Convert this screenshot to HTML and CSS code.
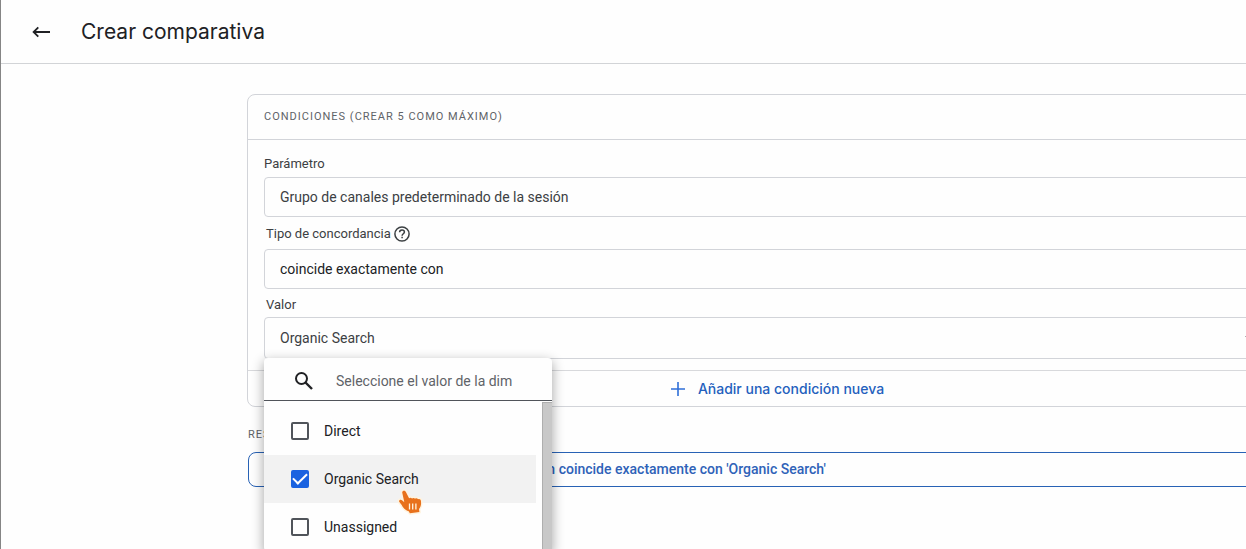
FILE: index.html
```html
<!DOCTYPE html>
<html lang="es">
<head>
<meta charset="utf-8">
<title>Crear comparativa</title>
<link rel="stylesheet" href="styles.css">
</head>
<body>
<div class="panel">
  <header class="topbar">
    <button class="back" type="button" aria-label="Volver">
      <svg width="20" height="14" viewBox="0 0 20 14" fill="none" stroke="currentColor" stroke-width="1.800"><path d="M19 7H3M7.300 2.300 2.600 7l4.700 4.700"/></svg>
    </button>
    <h1 class="title">Crear comparativa</h1>
  </header>
  <main class="content">
    <section class="card">
      <h2 class="card-head">CONDICIONES (CREAR 5 COMO MÁXIMO)</h2>
      <div class="fields">
        <div class="field">
          <label class="label label-first" for="param">Parámetro</label>
          <select class="control" id="param"><option>Grupo de canales predeterminado de la sesión</option></select>
        </div>
        <div class="field">
          <div class="label-row with-help">
            <label class="label" for="match">Tipo de concordancia</label>
            <svg class="help" width="16" height="16" viewBox="0 0 16 16" fill="none" stroke="currentColor" stroke-width="1.500"><circle cx="8" cy="8" r="7.100"/><path d="M5.600 6.300c0-1.400 1-2.300 2.400-2.300s2.400.9 2.400 2.100c0 1.600-2.300 1.800-2.300 3.600M8.100 10.700v1.500"/></svg>
          </div>
          <select class="control dark" id="match"><option>coincide exactamente con</option></select>
        </div>
        <div class="field">
          <div class="label-row"><label class="label" for="value">Valor</label></div>
          <div class="picker">
            <button class="control value" id="value" type="button"><span>Organic Search</span><i class="caret"></i></button>
            <div class="menu">
              <div class="search">
                <svg class="glass" width="20" height="20" viewBox="0 0 20 20" fill="none" stroke="currentColor" stroke-width="2"><circle cx="7.500" cy="7.500" r="5.500"/><path d="m11.500 11.500 6.500 6.500" stroke-width="2.400"/></svg>
                <input class="search-input" type="text" aria-label="Buscar valor" placeholder="Seleccione el valor de la dimensión">
              </div>
              <div class="list">
                <div class="options">
                  <label class="option"><input class="check" type="checkbox">Direct</label>
                  <label class="option selected"><input class="check" type="checkbox" checked>Organic Search
                    <svg class="hand" width="28" height="30" viewBox="0 0 28 30"><path d="M5.200 4.500c0-1.900 2.800-2.300 3.700-.5l3.200 6.300c.9-.9 2.200-.7 2.900.2.900-.9 2.300-.8 3.100.2.900-.8 2.300-.6 3 .5 1.300-.7 2.600.1 2.800 1.500.5 3.200 0 5.800-1.900 8.300l.4 3-9.500 1.300-1.200-2c-3-.8-5.600-3.300-7-6.300L2.200 13.800c-.6-1.700 1.400-2.800 2.800-1.500l2.300 1.900z" fill="#e8711c" stroke="#fff3df" stroke-width="3" stroke-linejoin="round" paint-order="stroke"/><path d="M12.500 15.500v6M15.700 15.500v6M18.900 15.500v6" stroke="#fff3df" stroke-width="1.300"/></svg>
                  </label>
                  <label class="option"><input class="check" type="checkbox">Unassigned</label>
                </div>
                <div class="scrollbar"></div>
              </div>
            </div>
          </div>
        </div>
      </div>
      <button class="add" type="button">
        <svg class="plus" width="14" height="14" viewBox="0 0 14 14" stroke="currentColor" stroke-width="1.600"><path d="M7 0v14M0 7h14"/></svg>
        <span>Añadir una condición nueva</span>
      </button>
    </section>
    <h2 class="summary-head">RESUMEN</h2>
    <div class="summary">Grupo de canales predeterminado de la sesión coincide exactamente con 'Organic Search'</div>
  </main>
</div>
</body>
</html>
```
FILE: styles.css
```css
* { box-sizing: border-box; }
body {
  margin: 0;
  background: #fefefe;
  color: #3c4043;
  font-family: Roboto, sans-serif;
  font-size: 14px;
}
.panel {
  min-height: 100vh;
  max-height: 100vh;
  overflow: hidden;
  border-left: 1px solid #858585;
}
.topbar {
  display: flex;
  align-items: center;
  gap: 30px;
  height: 64px;
  padding-left: 30px;
  border-bottom: 1px solid #d2d4d7;
  color: #202124;
}
button { margin: 0; padding: 0; border: 0; background: none; color: inherit; font: inherit; }
.back { display: flex; }
.title {
  margin: 0;
  font-family: Inter, sans-serif;
  font-size: 21px;
  font-weight: 400;
  line-height: 26px;
}
.content {
  margin-right: -62px;
  padding: 30px 0 0 246px;
}
.card {
  border: 1px solid #d2d4d9;
  border-radius: 8px;
}
.card-head, .summary-head {
  margin: 0;
  color: #5f6368;
  font-size: 11px;
  font-weight: 400;
  letter-spacing: 1px;
}
.card-head {
  padding: 0 16px;
  border-bottom: 1px solid #d2d4d9;
  line-height: 44px;
}
.fields {
  display: flex;
  flex-direction: column;
  gap: 8px;
  padding: 15px 16px 11px;
}
.label { font-size: 13px; line-height: 18px; }
.label-first { display: block; margin-bottom: 4px; }
.label-row {
  display: flex;
  align-items: center;
  gap: 3px;
  height: 16px;
  margin: 0 2px 4px;
}
.with-help { height: 18px; margin-bottom: 6px; }
.control {
  display: flex;
  align-items: center;
  justify-content: space-between;
  width: 100%;
  height: 40px;
  margin: 0;
  padding: 0 15px;
  border: 1px solid #d2d4d9;
  border-radius: 4px;
  background: #fefefe;
  color: #3c4043;
  font: inherit;
  font-size: 14px;
  appearance: none;
}
.dark { color: #202124; }
.help { color: #3c4043; }
.picker { position: relative; }
.value { height: 42px; }
.caret {
  margin-right: 20px;
  border: 5px solid transparent;
  border-top-color: #5f6368;
  border-bottom: 0;
}
.menu {
  position: absolute;
  z-index: 2;
  top: 41px;
  left: 0;
  width: 288px;
  border-radius: 4px;
  background: #fefefe;
  box-shadow: 0 4px 12px 1px rgba(0, 0, 0, .32);
  color: #202124;
}
.search {
  display: flex;
  align-items: center;
  gap: 22px;
  height: 43px;
  padding: 3px 40px 0 30px;
  border-bottom: 1px solid #50545a;
}
.glass { flex: none; }
.search-input {
  flex: 1;
  min-width: 0;
  padding: 0;
  border: 0;
  background: none;
  font: inherit;
}
.search-input::placeholder { color: #5f6368; }
.list { display: flex; gap: 6px; padding-top: 1px; }
.options { flex: 1; padding-top: 5px; }
.option {
  position: relative;
  display: flex;
  align-items: center;
  gap: 15px;
  height: 48px;
  padding-left: 27px;
}
.selected { background: #f2f2f2; }
.check {
  appearance: none;
  width: 18px;
  height: 18px;
  margin: 0;
  border: 2px solid #50545a;
  border-radius: 2px;
}
.check:checked {
  display: grid;
  place-items: center;
  border-color: #1a62e0;
  background: #1a62e0;
}
.check:checked::after {
  content: "";
  width: 12px;
  height: 6px;
  margin-top: -4px;
  border: solid #fff;
  border-width: 0 0 2px 2px;
  rotate: -45deg;
}
.hand { position: absolute; z-index: 1; left: 133px; top: 33px; }
.scrollbar {
  width: 10px;
  border: solid #aeaeae;
  border-width: 1px 0 0 1px;
  background: #c8c8c8;
}
.add {
  display: flex;
  align-items: center;
  justify-content: center;
  gap: 13px;
  width: 100%;
  height: 36px;
  border-top: 1px solid #d8d9dc;
  color: #2460bd;
  font-family: Inter, sans-serif;
  font-weight: 500;
}
.plus { color: #2f6fd8; }
.summary-head { padding: 20px 1px 9px; line-height: 16px; }
.summary {
  margin-left: 1px;
  padding: 0 16px;
  border: 1px solid #2862b5;
  border-radius: 8px;
  color: #2f62b8;
  font-weight: 500;
  line-height: 33px;
}
```
